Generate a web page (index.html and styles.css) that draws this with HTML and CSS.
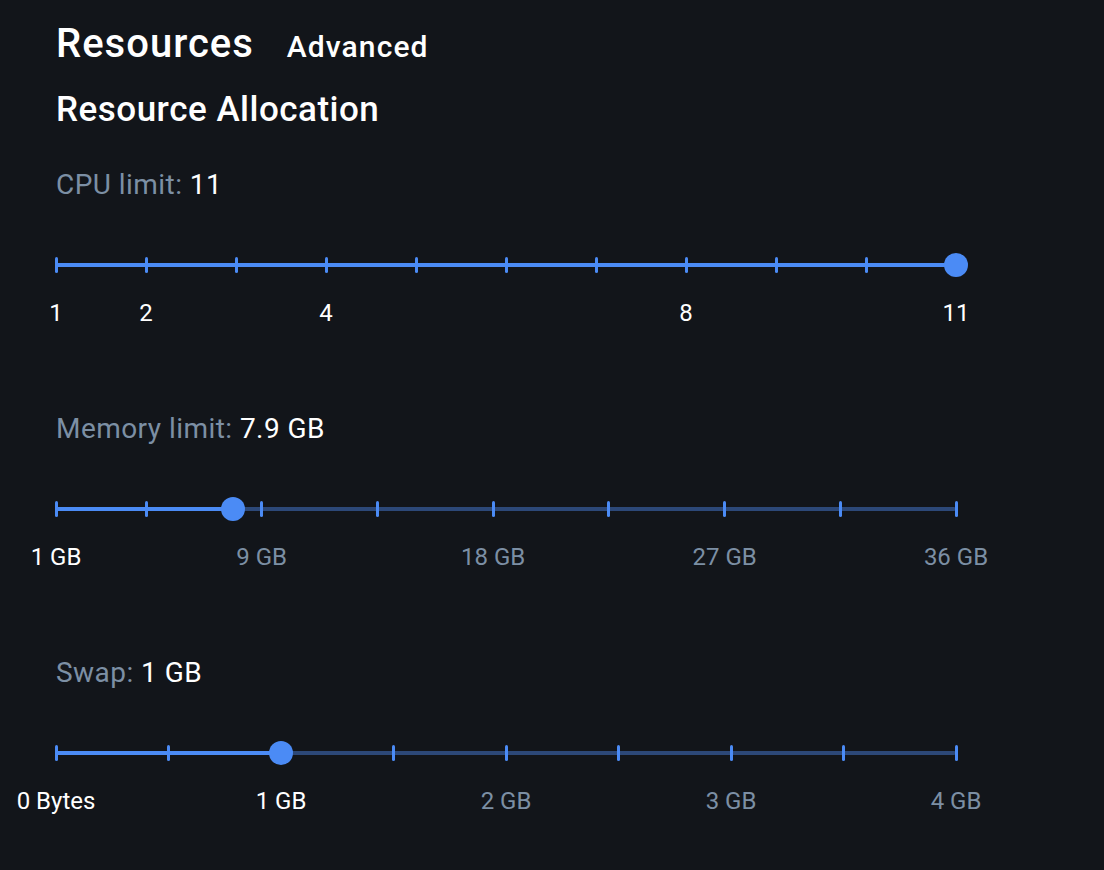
FILE: index.html
```html
<!DOCTYPE html>
<html lang="en">
<head>
<meta charset="utf-8">
<title>Resources</title>
<link rel="stylesheet" href="styles.css">
</head>
<body>
<div class="page">
  <div class="header">
    <h1 class="title">Resources</h1>
    <span class="tab">Advanced</span>
  </div>
  <h2 class="subtitle">Resource Allocation</h2>

  <section class="setting">
    <div class="setting-label"><span class="key">CPU limit:</span> <span class="value">11</span></div>
    <div class="slider">
      <div class="track"></div>
      <div class="fill" style="width:100%"></div>
      <span class="tick" style="left:0%"></span>
      <span class="tick" style="left:10%"></span>
      <span class="tick" style="left:20%"></span>
      <span class="tick" style="left:30%"></span>
      <span class="tick" style="left:40%"></span>
      <span class="tick" style="left:50%"></span>
      <span class="tick" style="left:60%"></span>
      <span class="tick" style="left:70%"></span>
      <span class="tick" style="left:80%"></span>
      <span class="tick" style="left:90%"></span>
      <span class="tick" style="left:100%"></span>
      <span class="thumb" style="left:100%"></span>
    </div>
    <div class="marks">
      <span class="mark on" style="left:0%">1</span>
      <span class="mark on" style="left:10%">2</span>
      <span class="mark on" style="left:30%">4</span>
      <span class="mark on" style="left:70%">8</span>
      <span class="mark on" style="left:100%">11</span>
    </div>
  </section>

  <section class="setting">
    <div class="setting-label"><span class="key">Memory limit:</span> <span class="value">7.9 GB</span></div>
    <div class="slider">
      <div class="track"></div>
      <div class="fill" style="width:19.714%"></div>
      <span class="tick" style="left:0%"></span>
      <span class="tick" style="left:10%"></span>
      <span class="tick" style="left:22.857%"></span>
      <span class="tick" style="left:35.714%"></span>
      <span class="tick" style="left:48.571%"></span>
      <span class="tick" style="left:61.429%"></span>
      <span class="tick" style="left:74.286%"></span>
      <span class="tick" style="left:87.143%"></span>
      <span class="tick" style="left:100%"></span>
      <span class="thumb" style="left:19.714%"></span>
    </div>
    <div class="marks">
      <span class="mark on" style="left:0%">1 GB</span>
      <span class="mark" style="left:22.857%">9 GB</span>
      <span class="mark" style="left:48.571%">18 GB</span>
      <span class="mark" style="left:74.286%">27 GB</span>
      <span class="mark" style="left:100%">36 GB</span>
    </div>
  </section>

  <section class="setting">
    <div class="setting-label"><span class="key">Swap:</span> <span class="value">1 GB</span></div>
    <div class="slider">
      <div class="track"></div>
      <div class="fill" style="width:25%"></div>
      <span class="tick" style="left:0%"></span>
      <span class="tick" style="left:12.5%"></span>
      <span class="tick" style="left:25%"></span>
      <span class="tick" style="left:37.5%"></span>
      <span class="tick" style="left:50%"></span>
      <span class="tick" style="left:62.5%"></span>
      <span class="tick" style="left:75%"></span>
      <span class="tick" style="left:87.5%"></span>
      <span class="tick" style="left:100%"></span>
      <span class="thumb" style="left:25%"></span>
    </div>
    <div class="marks">
      <span class="mark on" style="left:0%">0 Bytes</span>
      <span class="mark on" style="left:25%">1 GB</span>
      <span class="mark" style="left:50%">2 GB</span>
      <span class="mark" style="left:75%">3 GB</span>
      <span class="mark" style="left:100%">4 GB</span>
    </div>
  </section>
</div>
</body>
</html>
```

FILE: styles.css
```css
* { box-sizing: border-box; }

html, body {
  margin: 0;
  padding: 0;
  background: #12151a;
  color: #ffffff;
  font-family: Roboto, "Liberation Sans", sans-serif;
}

.page {
  width: 1104px;
  height: 870px;
  padding: 20px 0 0 56px;
  overflow: hidden;
}

.header {
  display: flex;
  align-items: baseline;
  gap: 33px;
  height: 48px;
}

.title {
  margin: 0;
  font-size: 40px;
  line-height: 48px;
  font-weight: 500;
  letter-spacing: 1px;
  color: #ffffff;
}

.tab {
  font-size: 30px;
  line-height: 48px;
  font-weight: 500;
  letter-spacing: 1.1px;
  color: #ffffff;
}

.subtitle {
  margin: 20px 0 0 0;
  font-size: 35px;
  line-height: 44px;
  font-weight: 500;
  letter-spacing: 0.5px;
  color: #ffffff;
}

.setting {
  margin-top: 33px;
}

.setting + .setting {
  margin-top: 81px;
}

.setting-label {
  font-size: 28px;
  line-height: 40px;
  font-weight: 400;
  letter-spacing: 0.45px;
}

.key { color: #7c8fa4; }
.value { color: #ffffff; }

.slider {
  position: relative;
  width: 900px;
  height: 48px;
  margin-top: 36px;
}

.track {
  position: absolute;
  left: 0;
  right: 0;
  top: 22px;
  height: 4px;
  border-radius: 2px;
  background: #2c4878;
}

.fill {
  position: absolute;
  left: 0;
  top: 22px;
  height: 4px;
  border-radius: 2px;
  background: #4b8bf5;
}

.tick {
  position: absolute;
  top: 16px;
  width: 3px;
  height: 16px;
  margin-left: -1.5px;
  border-radius: 1.5px;
  background: #4b8bf5;
}

.thumb {
  position: absolute;
  top: 12px;
  width: 24px;
  height: 24px;
  margin-left: -12px;
  border-radius: 50%;
  background: #4b8bf5;
}

.marks {
  position: relative;
  width: 900px;
  height: 30px;
  margin-top: 9px;
}

.mark {
  position: absolute;
  top: 0;
  transform: translateX(-50%);
  font-size: 24px;
  line-height: 30px;
  white-space: nowrap;
  color: #7c8fa4;
}

.mark.on { color: #ffffff; }
```
